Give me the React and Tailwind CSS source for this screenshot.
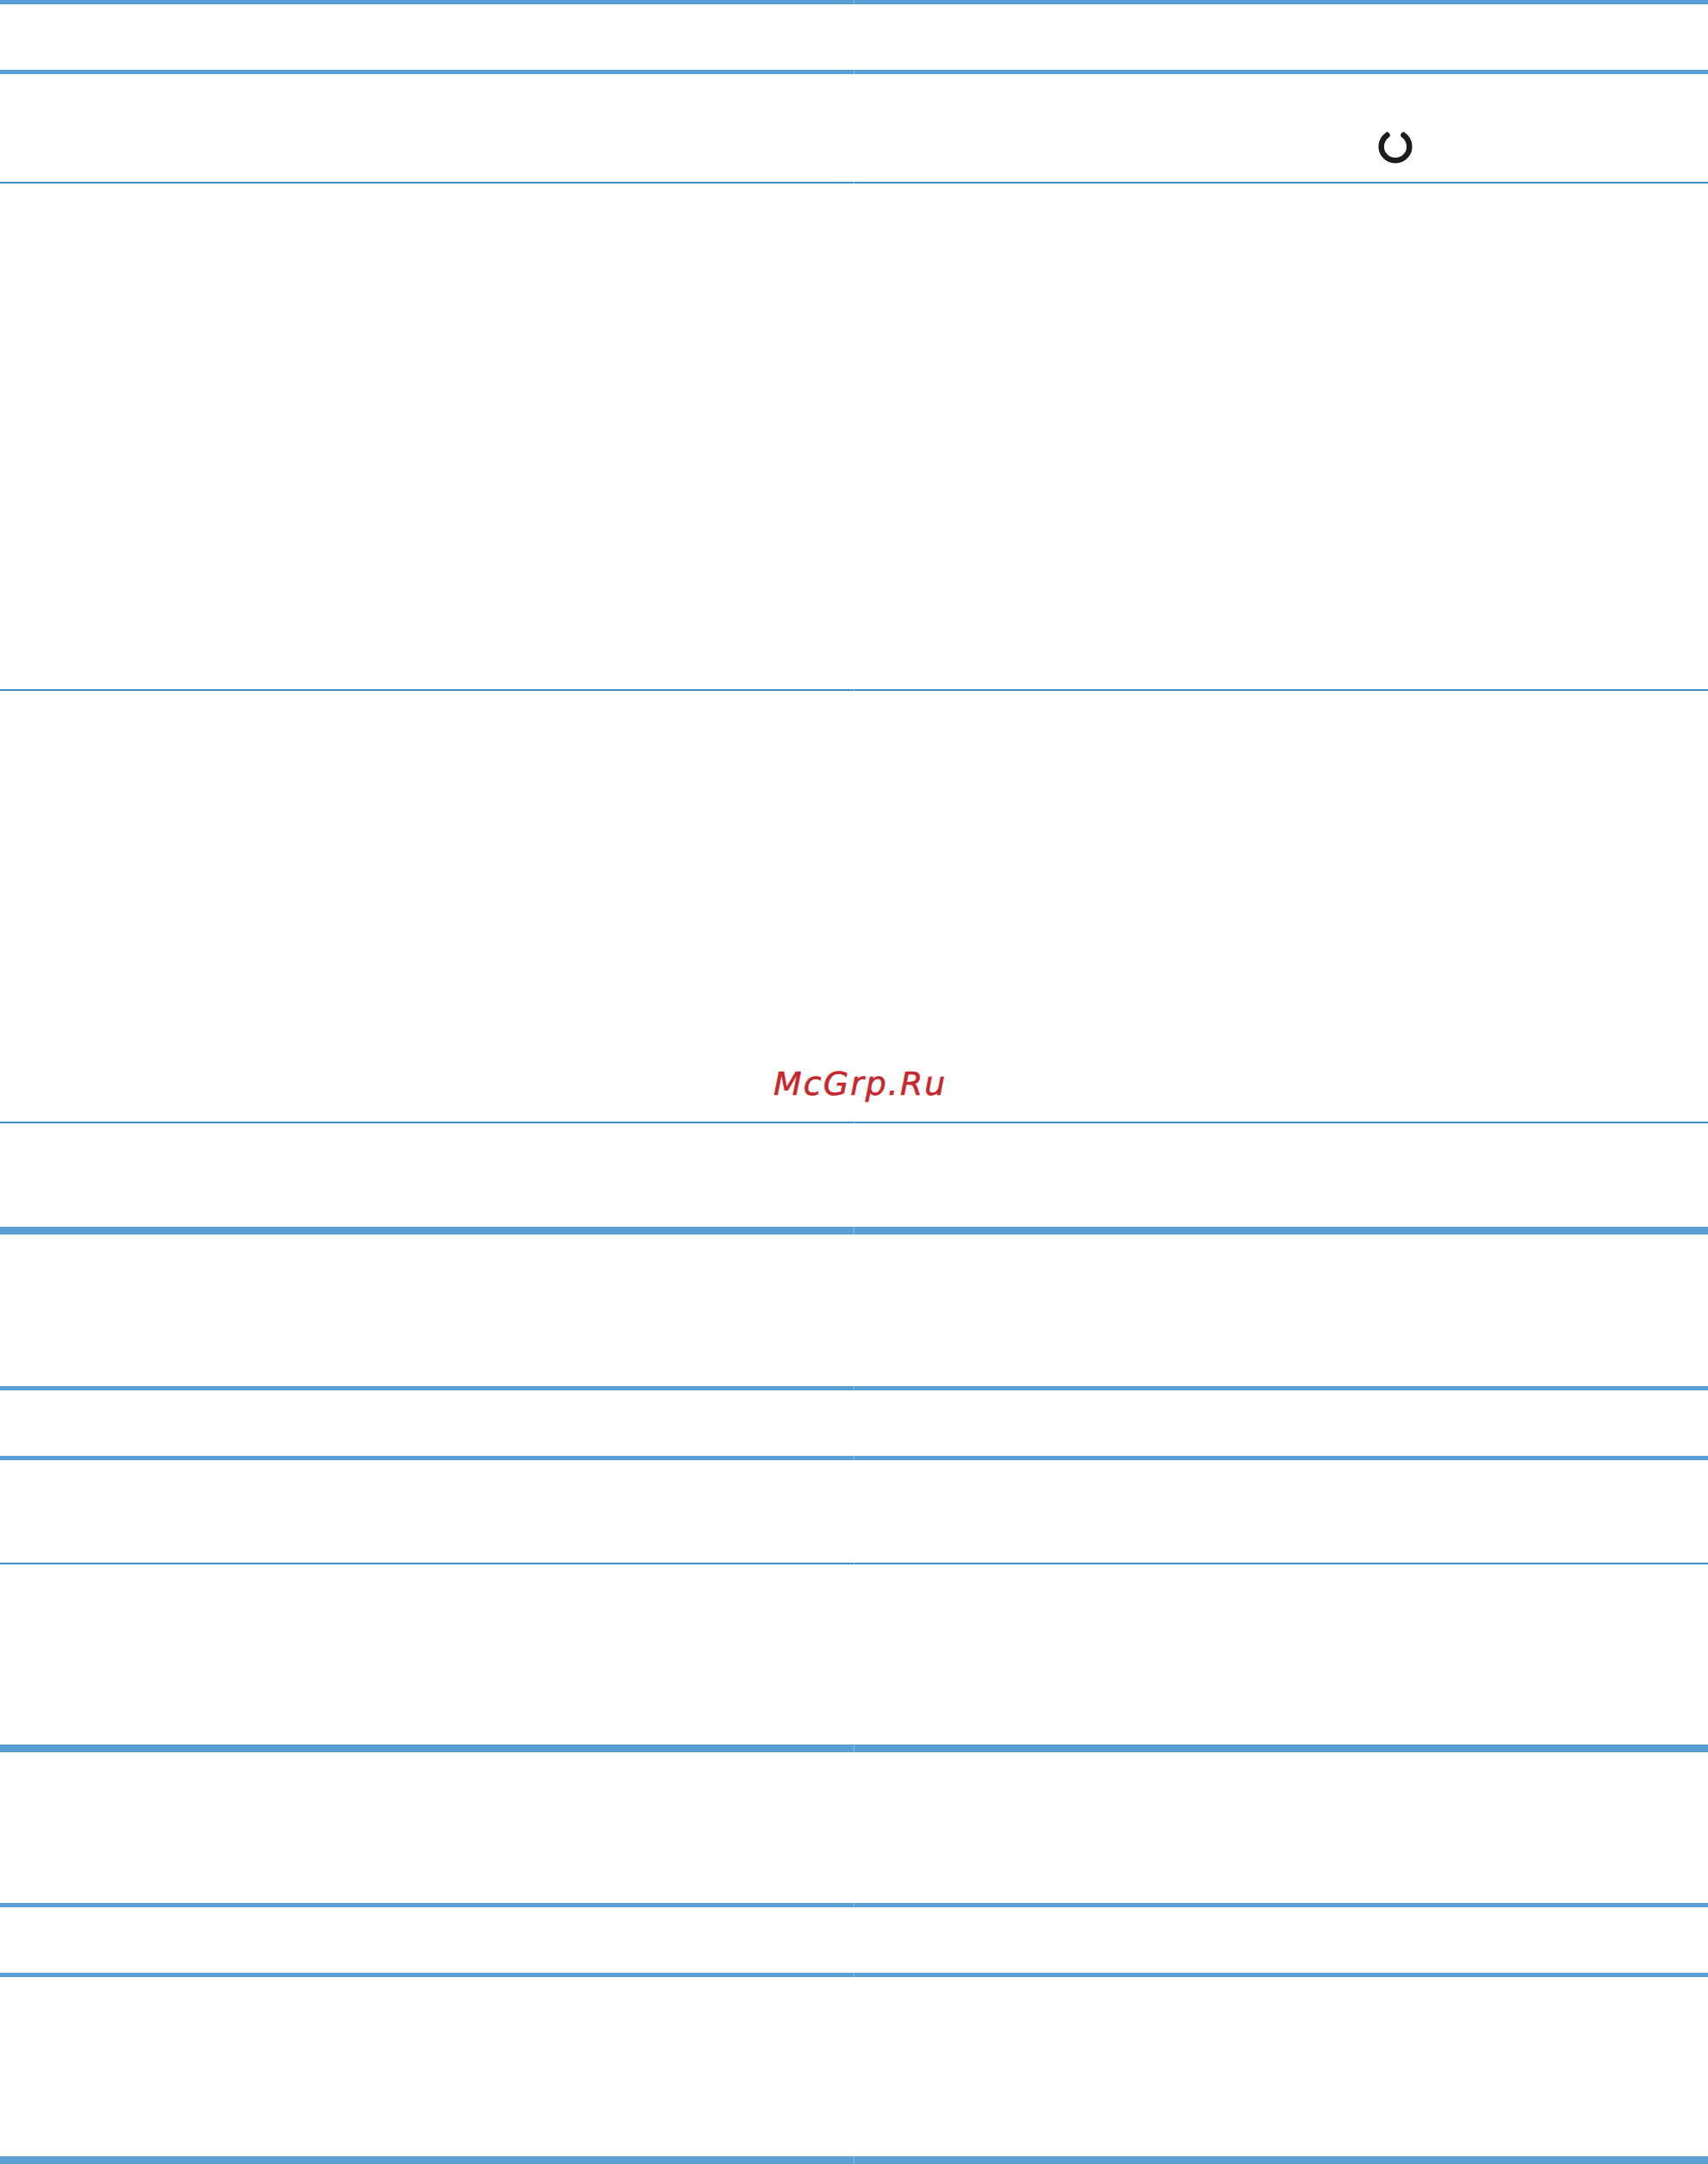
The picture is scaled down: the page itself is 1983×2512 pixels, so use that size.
const Rule = ({ className, color = 'bg-[#5a9fd4]' }) => (
  <div className={`grid grid-cols-[991px_1fr] gap-px bg-[#8dbde3] ${className}`}>
    <div className={color} />
    <div className={color} />
  </div>
);

// thin rules read darker than the thick ones in the reference
const ThinRule = () => <Rule className="h-[2px]" color="bg-[#3f8fcb]" />;

const PowerIcon = () => (
  <svg width="44" height="44" viewBox="0 0 44 44" fill="none" stroke="#1c1c1c" strokeWidth="6.5" strokeLinecap="round">
    <path d="M12.5 8.8 A16.3 16.3 0 1 0 31.5 8.8" />
  </svg>
);

export default function App() {
  return (
    <div className="flex h-[2512px] flex-col overflow-hidden bg-white font-['DejaVu_Sans',sans-serif]">
      <Rule className="h-[5px]" />
      <div className="h-[76px]" />
      <Rule className="h-[5px]" />
      <div className="flex h-[125px] items-start pl-[1598px] pt-[62px]">
        <PowerIcon />
      </div>
      <ThinRule />
      <div className="h-[587px]" />
      <ThinRule />
      <div className="flex h-[500px] items-end pb-[25px] pl-[898px]">
        <span className="text-[38px] italic leading-[38px] tracking-[2px] text-[#c6282d] [-webkit-text-stroke:0.6px_#c6282d]">McGrp.Ru</span>
      </div>
      <ThinRule />
      <div className="h-[120px]" />
      <Rule className="h-[9px]" />
      <div className="h-[176px]" />
      <Rule className="h-[5px]" />
      <div className="h-[76px]" />
      <Rule className="h-[5px]" />
      <div className="h-[119px]" />
      <ThinRule />
      <div className="h-[209px]" />
      <Rule className="h-[9px]" />
      <div className="h-[175px]" />
      <Rule className="h-[5px]" />
      <div className="h-[76px]" />
      <Rule className="h-[5px]" />
      <div className="h-[208px]" />
      <Rule className="h-[9px]" />
    </div>
  );
}
